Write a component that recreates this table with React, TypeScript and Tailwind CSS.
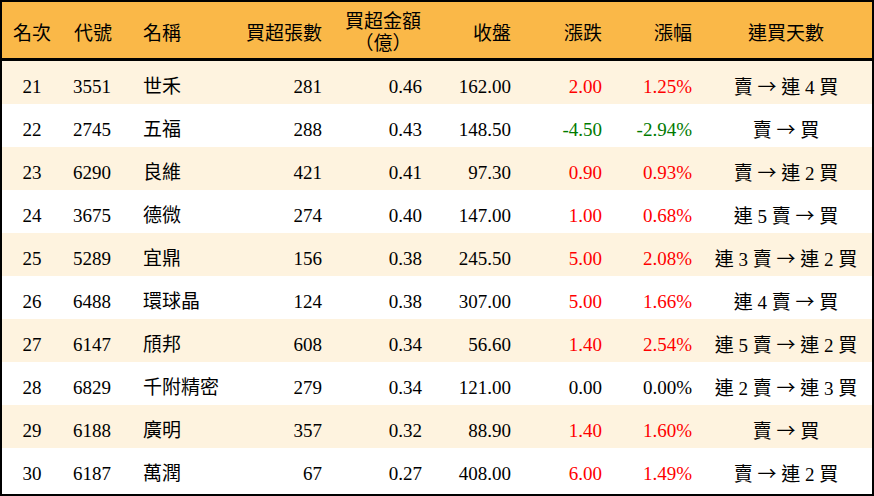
import React from 'react';

type Row = {
  rank: number;
  code: string;
  name: string;
  lots: number;
  amount: string;
  close: string;
  change: string;
  pct: string;
  streak: string;
};

const ROWS: Row[] = [
  { rank: 21, code: '3551', name: '世禾', lots: 281, amount: '0.46', close: '162.00', change: '2.00', pct: '1.25%', streak: '賣 → 連 4 買' },
  { rank: 22, code: '2745', name: '五福', lots: 288, amount: '0.43', close: '148.50', change: '-4.50', pct: '-2.94%', streak: '賣 → 買' },
  { rank: 23, code: '6290', name: '良維', lots: 421, amount: '0.41', close: '97.30', change: '0.90', pct: '0.93%', streak: '賣 → 連 2 買' },
  { rank: 24, code: '3675', name: '德微', lots: 274, amount: '0.40', close: '147.00', change: '1.00', pct: '0.68%', streak: '連 5 賣 → 買' },
  { rank: 25, code: '5289', name: '宜鼎', lots: 156, amount: '0.38', close: '245.50', change: '5.00', pct: '2.08%', streak: '連 3 賣 → 連 2 買' },
  { rank: 26, code: '6488', name: '環球晶', lots: 124, amount: '0.38', close: '307.00', change: '5.00', pct: '1.66%', streak: '連 4 賣 → 買' },
  { rank: 27, code: '6147', name: '頎邦', lots: 608, amount: '0.34', close: '56.60', change: '1.40', pct: '2.54%', streak: '連 5 賣 → 連 2 買' },
  { rank: 28, code: '6829', name: '千附精密', lots: 279, amount: '0.34', close: '121.00', change: '0.00', pct: '0.00%', streak: '連 2 賣 → 連 3 買' },
  { rank: 29, code: '6188', name: '廣明', lots: 357, amount: '0.32', close: '88.90', change: '1.40', pct: '1.60%', streak: '賣 → 買' },
  { rank: 30, code: '6187', name: '萬潤', lots: 67, amount: '0.27', close: '408.00', change: '6.00', pct: '1.49%', streak: '賣 → 連 2 買' },
];

// 漲跌顏色：正紅、負綠、平黑
function tone(v: string) {
  const n = parseFloat(v);
  if (n > 0) return 'text-[#ff0000]';
  if (n < 0) return 'text-[#007a00]';
  return 'text-black';
}

// 箭頭改用 CJK 字型，較長
function Streak({ text }: { text: string }) {
  const [from, to] = text.split(' → ');
  return (
    <>
      {from}{' '}
      <span style={{ fontFamily: '"Noto Sans CJK TC", sans-serif' }}>→</span>{' '}
      {to}
    </>
  );
}

const COLS = 'grid grid-cols-[60px_70px_100px_100px_100px_89px_91px_90px_170px] items-center';

export default function App() {
  return (
    <div
      className="w-[874px] h-[496px] border-2 border-black bg-white text-black text-[19px] leading-none overflow-hidden"
      style={{ fontFamily: '"Liberation Serif", "Noto Sans CJK TC", serif' }}
    >
      <div className={`${COLS} h-[59px] pt-[6px] bg-[#fab848] border-b-[3px] border-black`}>
        <div className="text-center">名次</div>
        <div className="pl-[12px]">代號</div>
        <div className="pl-[11px]">名稱</div>
        <div className="text-right pr-[10px]">買超張數</div>
        <div className="flex justify-end pr-[11px]">
          <div className="text-center leading-[22px]">
            <div>買超金額</div>
            <div>（億）</div>
          </div>
        </div>
        <div className="text-right pr-[10px]">收盤</div>
        <div className="text-right pr-[10px]">漲跌</div>
        <div className="text-right pr-[10px]">漲幅</div>
        <div className="text-center pr-[2px]">連買天數</div>
      </div>

      {ROWS.map((r, i) => (
        <div
          key={r.rank}
          className={`${COLS} h-[43px] pt-[8px] ${i % 2 === 0 ? 'bg-[#fef3df]' : 'bg-white'}`}
        >
          <div className="text-center">{r.rank}</div>
          <div className="pl-[11px]">{r.code}</div>
          <div className="pl-[11px]">{r.name}</div>
          <div className="text-right pr-[10px]">{r.lots}</div>
          <div className="text-right pr-[10px]">{r.amount}</div>
          <div className="text-right pr-[10px]">{r.close}</div>
          <div className={`text-right pr-[10px] ${tone(r.change)}`}>{r.change}</div>
          <div className={`text-right pr-[10px] ${tone(r.pct)}`}>{r.pct}</div>
          <div className="text-center pr-[2px] whitespace-nowrap">
            <Streak text={r.streak} />
          </div>
        </div>
      ))}
    </div>
  );
}
